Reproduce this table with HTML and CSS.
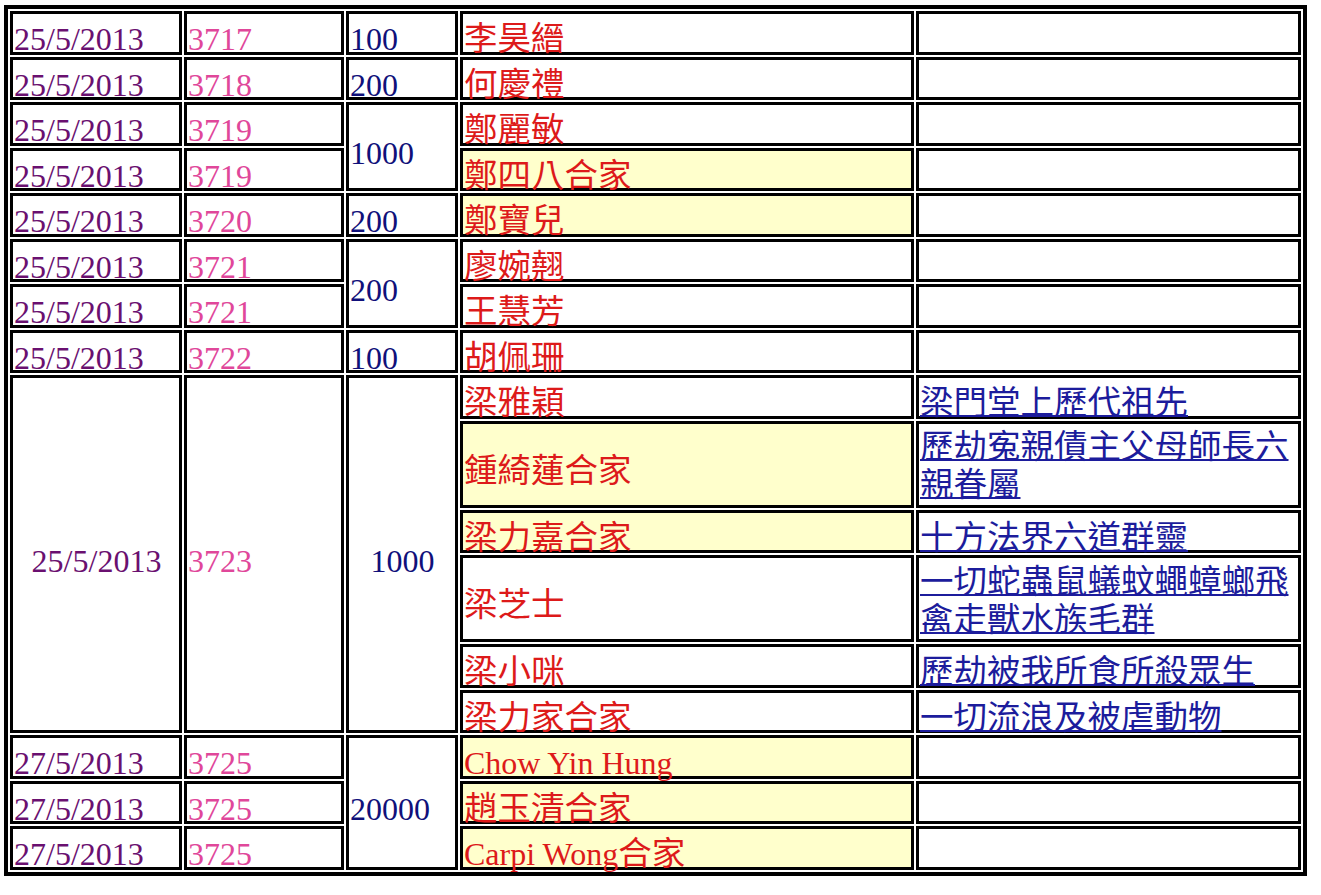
FILE: index.html
```html
<!DOCTYPE html>
<html lang="zh-Hant">
<head>
<meta charset="utf-8">
<title>功德芳名</title>
<link rel="stylesheet" href="styles.css">
</head>
<body>
<table class="sheet">
  <colgroup>
    <col class="c-date">
    <col class="c-no">
    <col class="c-amt">
    <col class="c-name">
    <col class="c-note">
  </colgroup>
  <tbody>
    <tr class="r">
      <td class="date">25/5/2013</td><td class="no">3717</td><td class="amt">100</td>
      <td class="name"><span class="zh">李昊縉</span></td><td class="note"></td>
    </tr>
    <tr class="r">
      <td class="date">25/5/2013</td><td class="no">3718</td><td class="amt">200</td>
      <td class="name"><span class="zh">何慶禮</span></td><td class="note"></td>
    </tr>
    <tr class="r">
      <td class="date">25/5/2013</td><td class="no">3719</td><td class="amt" rowspan="2">1000</td>
      <td class="name"><span class="zh">鄭麗敏</span></td><td class="note"></td>
    </tr>
    <tr class="r">
      <td class="date">25/5/2013</td><td class="no">3719</td>
      <td class="name hl"><span class="zh">鄭四八合家</span></td><td class="note"></td>
    </tr>
    <tr class="r">
      <td class="date">25/5/2013</td><td class="no">3720</td><td class="amt">200</td>
      <td class="name hl"><span class="zh">鄭寶兒</span></td><td class="note"></td>
    </tr>
    <tr class="r">
      <td class="date">25/5/2013</td><td class="no">3721</td><td class="amt" rowspan="2">200</td>
      <td class="name"><span class="zh">廖婉翹</span></td><td class="note"></td>
    </tr>
    <tr class="r">
      <td class="date">25/5/2013</td><td class="no">3721</td>
      <td class="name"><span class="zh">王慧芳</span></td><td class="note"></td>
    </tr>
    <tr class="r">
      <td class="date">25/5/2013</td><td class="no">3722</td><td class="amt">100</td>
      <td class="name"><span class="zh">胡佩珊</span></td><td class="note"></td>
    </tr>
    <tr class="r">
      <td class="date center" rowspan="6">25/5/2013</td>
      <td class="no" rowspan="6">3723</td>
      <td class="amt center" rowspan="6">1000</td>
      <td class="name"><span class="zh">梁雅穎</span></td>
      <td class="note"><span class="zh lnk">梁門堂上歷代祖先</span></td>
    </tr>
    <tr class="t">
      <td class="name hl"><span class="zh">鍾綺蓮合家</span></td>
      <td class="note wrap"><span class="zh lnk">歷劫寃親債主父母師長六親眷屬</span></td>
    </tr>
    <tr class="r">
      <td class="name hl"><span class="zh">梁力嘉合家</span></td>
      <td class="note"><span class="zh lnk">十方法界六道群靈</span></td>
    </tr>
    <tr class="t">
      <td class="name"><span class="zh">梁芝士</span></td>
      <td class="note wrap"><span class="zh lnk">一切蛇蟲鼠蟻蚊蠅蟑螂飛禽走獸水族毛群</span></td>
    </tr>
    <tr class="r">
      <td class="name"><span class="zh">梁小咪</span></td>
      <td class="note"><span class="zh lnk">歷劫被我所食所殺眾生</span></td>
    </tr>
    <tr class="r">
      <td class="name"><span class="zh">梁力家合家</span></td>
      <td class="note"><span class="zh lnk">一切流浪及被虐動物</span></td>
    </tr>
    <tr class="r">
      <td class="date">27/5/2013</td><td class="no">3725</td><td class="amt" rowspan="3">20000</td>
      <td class="name hl">Chow Yin Hung</td><td class="note"></td>
    </tr>
    <tr class="r">
      <td class="date">27/5/2013</td><td class="no">3725</td>
      <td class="name hl"><span class="zh">趙玉清合家</span></td><td class="note"></td>
    </tr>
    <tr class="r">
      <td class="date">27/5/2013</td><td class="no">3725</td>
      <td class="name hl">Carpi Wong<span class="zh">合家</span></td><td class="note"></td>
    </tr>
  </tbody>
</table>
</body>
</html>
```
FILE: styles.css
```css
html, body {
  margin: 0;
  padding: 0;
  background: #ffffff;
}

.sheet {
  margin: 5px 0 0 4px;
  box-sizing: border-box;
  width: 1303px;
  table-layout: fixed;
  border-collapse: separate;
  border-spacing: 2px;
  border: 4px solid #000000;
  font-family: "Liberation Serif", "Noto Sans CJK TC", serif;
  font-size: 32px;
}

.c-date { width: 172px; }
.c-no { width: 160px; }
.c-amt { width: 112px; }
.c-name { width: 454px; }
.c-note { width: 385px; }

.sheet td {
  border: 3px solid #000000;
  padding: 13px 0 0 1px;
  line-height: 24px;
  white-space: nowrap;
  text-align: left;
  vertical-align: middle;
  background: #ffffff;
}

tr.r { height: 43.5px; }
tr.t { height: 87px; }

.zh {
  font-size: 33.5px;
}

.date { color: #6a1070; }
.no { color: #e0479a; }
.amt { color: #10107a; }
.name { color: #dd1a1a; }
.note { color: #1c1c9c; }

.sheet td.center { text-align: center; }

.sheet td.hl { background: #ffffcc; }

.lnk {
  text-decoration: underline;
  text-decoration-thickness: 2px;
  text-underline-offset: 1px;
}

.sheet td.wrap {
  white-space: normal;
  padding-top: 4px;
  line-height: 38px;
  word-break: break-all;
}
```
